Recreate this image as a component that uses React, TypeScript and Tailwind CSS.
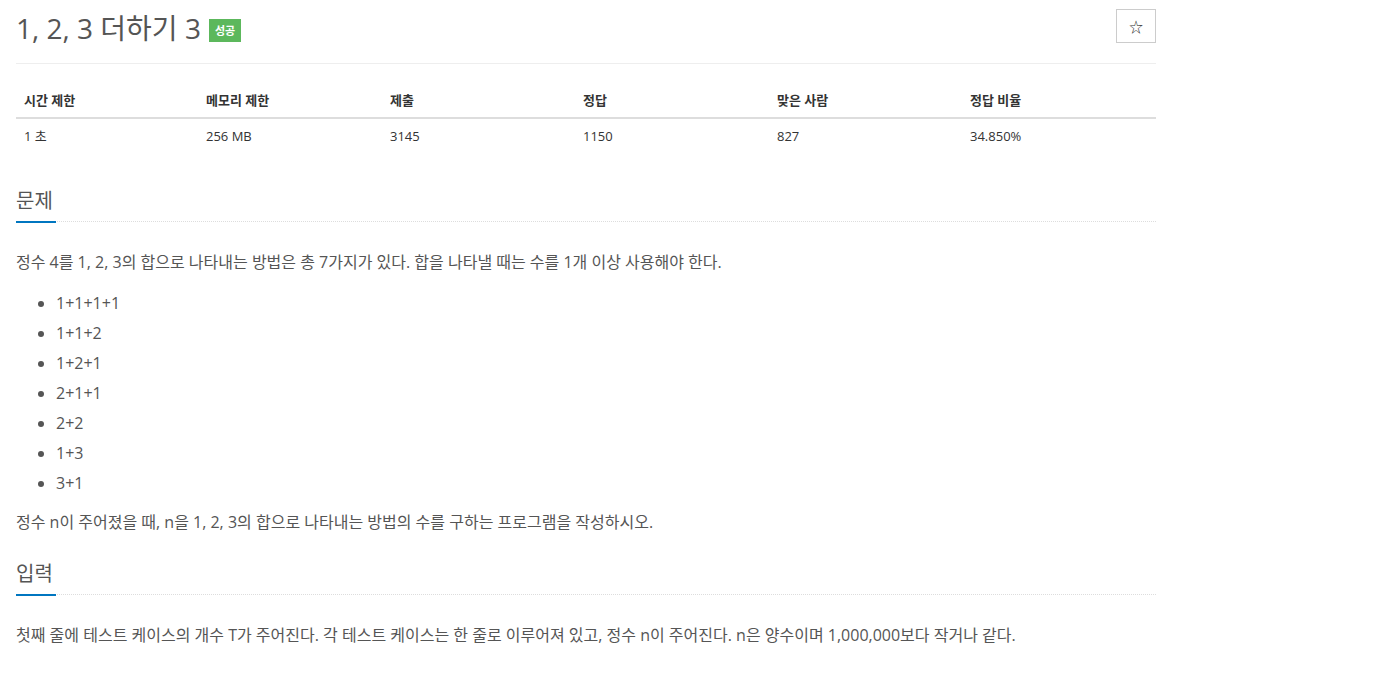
import { useState } from 'react';

const font = { fontFamily: '"Open Sans", "Noto Sans CJK KR", sans-serif' };

const stats = [
  { label: '시간 제한', value: '1 초', w: 'w-[182px]' },
  { label: '메모리 제한', value: '256 MB', w: 'w-[184px]' },
  { label: '제출', value: '3145', w: 'w-[193px]' },
  { label: '정답', value: '1150', w: 'w-[194px]' },
  { label: '맞은 사람', value: '827', w: 'w-[193px]' },
  { label: '정답 비율', value: '34.850%', w: 'w-[194px]' },
];

const examples = ['1+1+1+1', '1+1+2', '1+2+1', '2+1+1', '2+2', '1+3', '3+1'];

function SectionTitle({ title }: { title: string }) {
  return (
    <div className="relative border-b border-dotted border-[#ddd] pb-[6px]">
      <h2 className="text-[20px] leading-[28px] text-[#555]">{title}</h2>
      <span className="absolute left-0 bottom-[-2px] h-[2px] w-[40px] bg-[#0076c0]" />
    </div>
  );
}

export default function App() {
  const [starred, setStarred] = useState(false);

  return (
    <div className="min-h-screen bg-white" style={font}>
      <div className="w-[1140px] ml-[16px]">
        <div className="flex justify-between items-start pt-[9px] pb-[16px] border-b border-[#eee]">
          <div className="flex items-center">
            <h1 className="text-[28px] leading-[38px] text-[#555]">1, 2, 3 더하기 3</h1>
            <span className="ml-[8px] mt-[5px] bg-[#5cb85c] text-white text-[11px] font-bold px-[6px] leading-[23px]">
              성공
            </span>
          </div>
          <button
            onClick={() => setStarred(!starred)}
            className="w-[40px] h-[34px] border border-[#ccc] flex items-center justify-center text-[#333] text-[14px]"
          >
            {starred ? '★' : '☆'}
          </button>
        </div>

        <table className="w-full table-fixed mt-[27px] text-[13px] text-[#333]">
          <thead>
            <tr className="border-b-2 border-[#ddd]">
              {stats.map((s) => (
                <th key={s.label} className={`${s.w} text-left font-bold px-[8px] pb-[8px] leading-[18px]`}>
                  {s.label}
                </th>
              ))}
            </tr>
          </thead>
          <tbody>
            <tr>
              {stats.map((s) => (
                <td key={s.label} className="px-[8px] py-[8px] leading-[18px]">
                  {s.value}
                </td>
              ))}
            </tr>
          </tbody>
        </table>

        <div className="mt-[34px]">
          <SectionTitle title="문제" />
          <div className="text-[16px] text-[#555] leading-[30px] pt-[25px]">
            <p>정수 4를 1, 2, 3의 합으로 나타내는 방법은 총 7가지가 있다. 합을 나타낼 때는 수를 1개 이상 사용해야 한다.</p>
            <ul className="list-disc pl-[40px] mt-[11px] mb-[9px]">
              {examples.map((e) => (
                <li key={e}>{e}</li>
              ))}
            </ul>
            <p>정수 n이 주어졌을 때, n을 1, 2, 3의 합으로 나타내는 방법의 수를 구하는 프로그램을 작성하시오.</p>
          </div>
        </div>

        <div className="mt-[23px]">
          <SectionTitle title="입력" />
          <div className="text-[16px] text-[#555] leading-[30px] pt-[25px]">
            <p>
              첫째 줄에 테스트 케이스의 개수 T가 주어진다. 각 테스트 케이스는 한 줄로 이루어져 있고, 정수 n이 주어진다. n은 양수이며 1,000,000보다 작거나 같다.
            </p>
          </div>
        </div>
      </div>
    </div>
  );
}
